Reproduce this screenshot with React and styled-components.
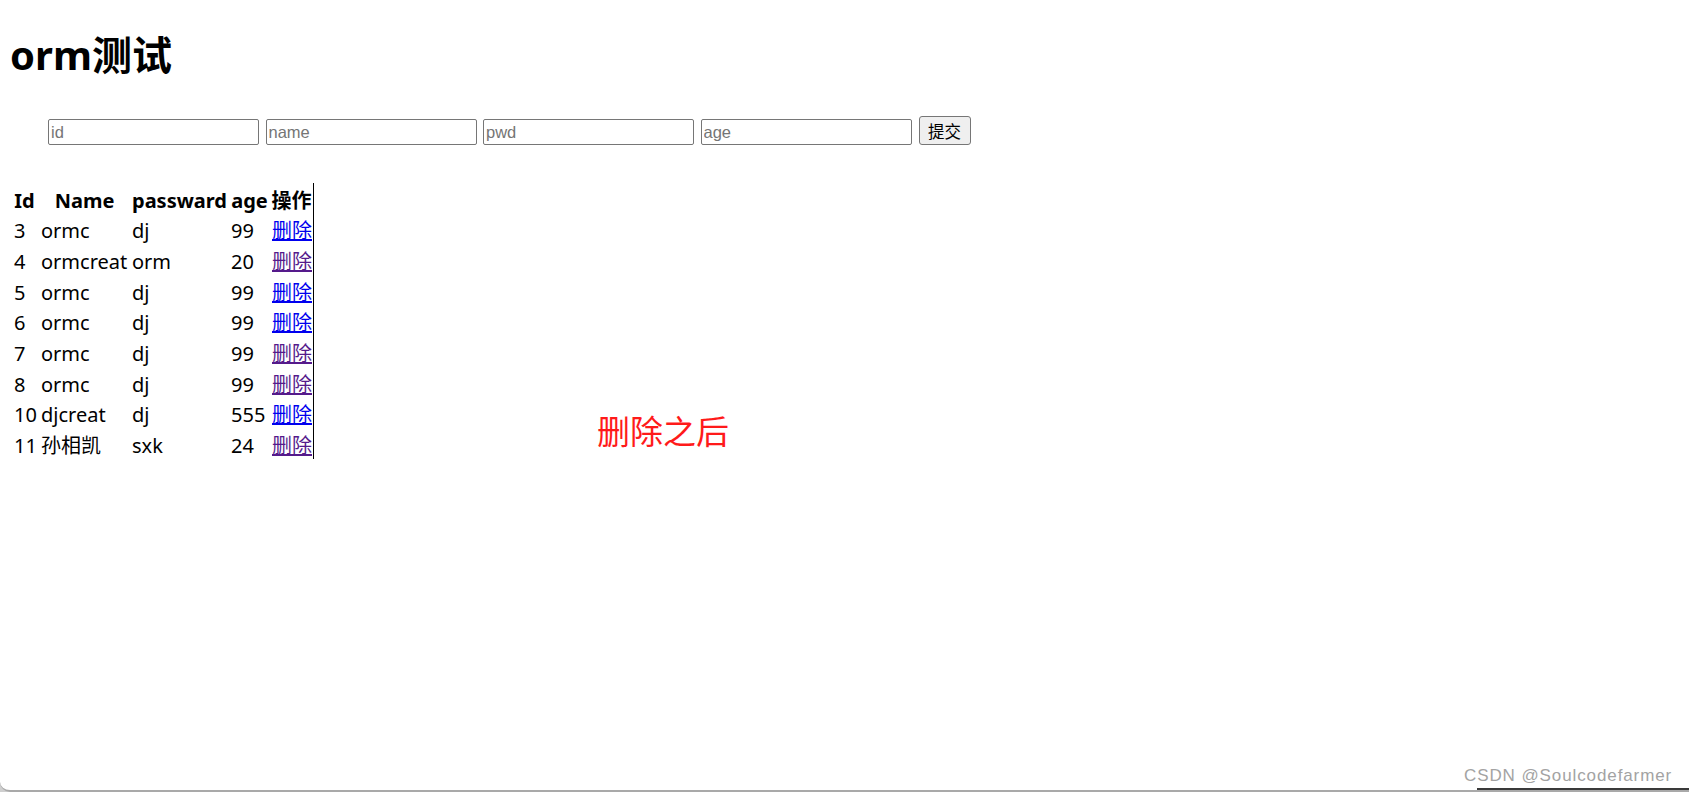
import styled, { createGlobalStyle } from 'styled-components';

const GlobalStyle = createGlobalStyle`
  html, body {
    margin: 0;
    padding: 0;
    background: #cfcfcf;
  }
  body {
    font-family: "Noto Sans", "Noto Sans CJK SC", sans-serif;
    color: #000;
  }
`

const Page = styled.div`
  position: relative;
  box-sizing: border-box;
  height: 792px;
  padding: 0 10px;
  background: #fff;
  border-bottom: 2px solid #a9a9a9;
  border-bottom-left-radius: 10px;
  overflow: hidden;

  &::after {
    content: '';
    position: absolute;
    left: 1477px;
    right: 0;
    bottom: 0;
    height: 2px;
    background: #3a3a3a;
  }
`

const Title = styled.h1`
  margin: 31px 0 0;
  font-size: 40px;
  line-height: 48px;
  font-weight: 700;
  font-family: "Noto Sans", "Noto Sans CJK SC", sans-serif;
`

const Form = styled.form`
  display: flex;
  align-items: flex-end;
  margin: 37px 0 0;
  padding-left: 38px;
`

const Input = styled.input`
  box-sizing: border-box;
  width: 211px;
  height: 26px;
  margin: 0 6.5px 0 0;
  padding: 0 2px;
  border: 1px solid #767676;
  border-radius: 2px;
  font-family: "Liberation Sans", Arial, sans-serif;
  font-size: 16.5px;
  color: #000;
  background: #fff;

  &::placeholder {
    color: #757575;
  }
`

const SubmitButton = styled.button`
  box-sizing: border-box;
  width: 52px;
  height: 29px;
  margin-left: 0.5px;
  padding: 0;
  border: 1px solid #767676;
  border-radius: 3px;
  background: #efefef;
  font-family: "Noto Sans CJK SC", sans-serif;
  font-size: 16.5px;
  color: #000;
`

const Table = styled.table`
  margin-top: 38px;
  table-layout: fixed;
  width: 304px;
  border-collapse: separate;
  border-spacing: 0;
  border-right: 1px solid #000;
  font-size: 20px;
`

const Th = styled.th`
  height: 30.67px;
  box-sizing: border-box;
  padding: 3.5px 0 0;
  line-height: 27.17px;
  font-weight: 700;
  text-align: center;
  vertical-align: top;
  white-space: nowrap;
  overflow: visible;
`

const Td = styled.td`
  height: 30.67px;
  box-sizing: border-box;
  padding: 3.5px 0 0 ${p => (p.$first ? '4px' : '2px')};
  line-height: 27.17px;
  text-align: left;
  vertical-align: top;
  white-space: nowrap;
`

const DeleteLink = styled.a`
  color: ${p => (p.$visited ? '#551a8b' : '#0000ee')};
  text-decoration: underline;
`

const Note = styled.div`
  position: absolute;
  left: 597px;
  top: 414px;
  font-family: "Noto Sans CJK SC", sans-serif;
  font-size: 33px;
  line-height: 33px;
  color: #ff1a1a;
`

const Watermark = styled.div`
  position: absolute;
  left: 1464px;
  top: 767px;
  font-family: "Liberation Sans", Arial, sans-serif;
  font-size: 17px;
  line-height: 17px;
  letter-spacing: 0.9px;
  color: #a3a3a3;
`

const users = [
  { id: 3, name: 'ormc', pwd: 'dj', age: 99, visited: false },
  { id: 4, name: 'ormcreat', pwd: 'orm', age: 20, visited: true },
  { id: 5, name: 'ormc', pwd: 'dj', age: 99, visited: false },
  { id: 6, name: 'ormc', pwd: 'dj', age: 99, visited: false },
  { id: 7, name: 'ormc', pwd: 'dj', age: 99, visited: true },
  { id: 8, name: 'ormc', pwd: 'dj', age: 99, visited: true },
  { id: 10, name: 'djcreat', pwd: 'dj', age: 555, visited: false },
  { id: 11, name: '孙相凯', pwd: 'sxk', age: 24, visited: true },
]

function App() {
  return (
    <>
      <GlobalStyle />
      <Page>
        <Title>orm测试</Title>
        <Form onSubmit={e => e.preventDefault()}>
          <Input placeholder="id" />
          <Input placeholder="name" />
          <Input placeholder="pwd" />
          <Input placeholder="age" />
          <SubmitButton type="submit">提交</SubmitButton>
        </Form>
        <Table>
          <colgroup>
            <col style={{ width: 29 }} />
            <col style={{ width: 91 }} />
            <col style={{ width: 99 }} />
            <col style={{ width: 41 }} />
            <col style={{ width: 43 }} />
          </colgroup>
          <thead>
            <tr>
              <Th>Id</Th>
              <Th>Name</Th>
              <Th>passward</Th>
              <Th>age</Th>
              <Th>操作</Th>
            </tr>
          </thead>
          <tbody>
            {users.map(u => (
              <tr key={u.id}>
                <Td $first>{u.id}</Td>
                <Td>{u.name}</Td>
                <Td>{u.pwd}</Td>
                <Td>{u.age}</Td>
                <Td>
                  <DeleteLink href="#" $visited={u.visited}>删除</DeleteLink>
                </Td>
              </tr>
            ))}
          </tbody>
        </Table>
        <Note>删除之后</Note>
        <Watermark>CSDN @Soulcodefarmer</Watermark>
      </Page>
    </>
  )
}

export default App
